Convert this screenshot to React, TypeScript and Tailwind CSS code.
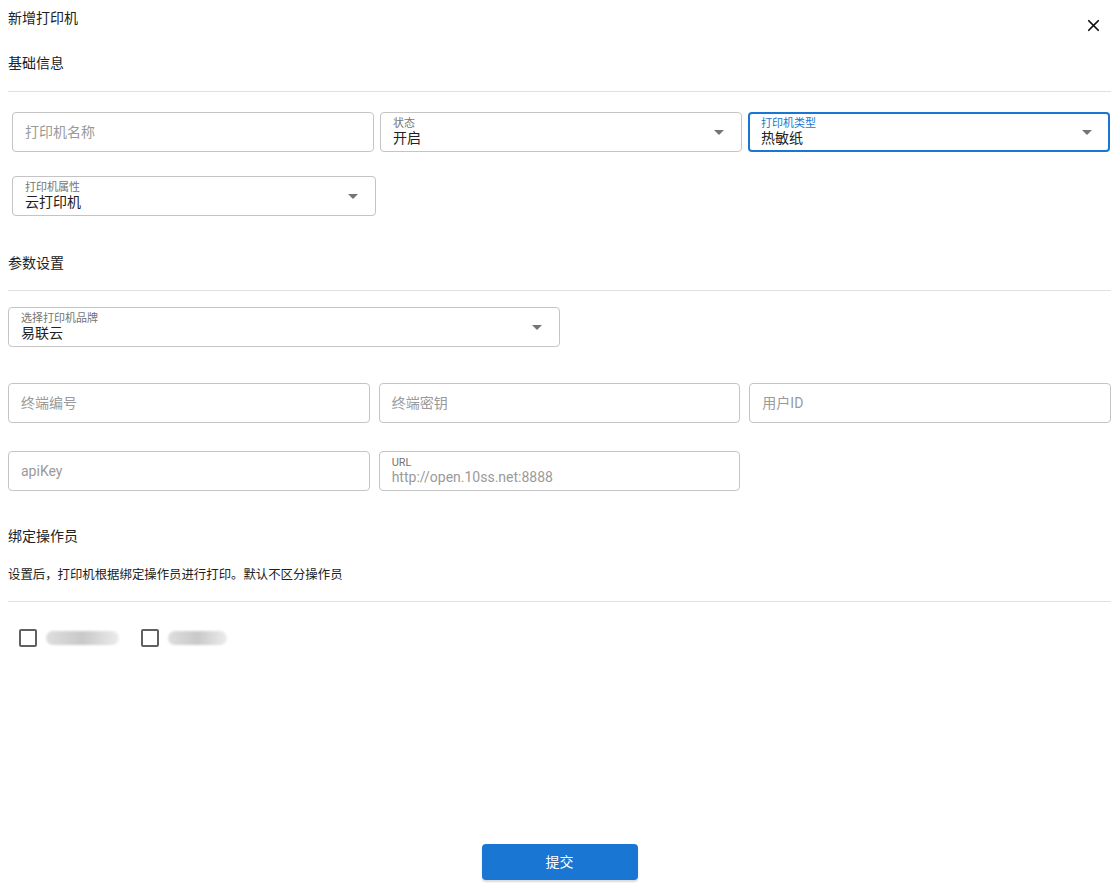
import { X } from 'lucide-react'

type FieldProps = {
  label?: string
  value?: string
  placeholder?: string
  select?: boolean
  focused?: boolean
  className?: string
}

function Field({ label, value, placeholder, select, focused, className }: FieldProps) {
  return (
    <div
      className={`relative flex h-[40px] items-center rounded-[4px] bg-white ${
        focused ? 'border-2 border-[#1976d2] px-[11px]' : 'border border-[#c4c4c4] px-[12px]'
      } ${className ?? ''}`}
    >
      <div className="flex min-w-0 flex-1 flex-col justify-center">
        {label && (
          <span
            className={`text-[11px] leading-[12px] ${focused ? 'text-[#1976d2]' : 'text-[#757575]'}`}
          >
            {label}
          </span>
        )}
        {value && <span className="text-[14px] leading-[17px] text-[#212121]">{value}</span>}
        {placeholder && (
          <span className="text-[14px] leading-[17px] text-[#9a9a9a]">{placeholder}</span>
        )}
      </div>
      {select && (
        <span className="mr-[5px] h-0 w-0 border-x-[5px] border-t-[5px] border-x-transparent border-t-[#757575]" />
      )}
    </div>
  )
}

function SectionTitle({ children, className }: { children: string; className?: string }) {
  return <div className={`px-2 text-[14px] leading-[16px] text-[#212121] ${className ?? ''}`}>{children}</div>
}

function Divider({ className }: { className?: string }) {
  return <div className={`mx-2 h-px bg-[#e0e0e0] ${className ?? ''}`} />
}

function Operator({ width }: { width: number }) {
  return (
    <label className="flex items-center gap-[9px]">
      <span className="h-[18px] w-[18px] rounded-[2px] border-2 border-[#616161]" />
      <span
        className="h-[14px] rounded-full bg-gradient-to-r from-[#dedede] via-[#c9c9c9] to-[#ececec] blur-[1px]"
        style={{ width }}
      />
    </label>
  )
}

export default function App() {
  return (
    <div
      className="relative flex h-[889px] w-[1119px] flex-col bg-white"
      style={{ fontFamily: 'Roboto, "Noto Sans CJK SC", sans-serif' }}
    >
      <div className="h-[40px] px-2 pt-[10px] text-[14px] leading-[16px] text-[#212121]">新增打印机</div>
      <button className="absolute right-[16px] top-[16px] text-[#111]">
        <X size={19} strokeWidth={2.2} />
      </button>

      <SectionTitle className="mt-[15px]">基础信息</SectionTitle>
      <Divider className="mt-[20px]" />

      <div className="mt-[20px] grid grid-cols-3 gap-[6px] pl-[12px] pr-[9px]">
        <Field placeholder="打印机名称" />
        <Field label="状态" value="开启" select />
        <Field label="打印机类型" value="热敏纸" select focused />
      </div>
      <div className="mt-[24px] pl-[12px]">
        <Field label="打印机属性" value="云打印机" select className="w-[364px]" />
      </div>

      <SectionTitle className="mt-[39px]">参数设置</SectionTitle>
      <Divider className="mt-[19px]" />

      <div className="mt-[16px] px-2">
        <Field label="选择打印机品牌" value="易联云" select className="w-[552px]" />
      </div>

      <div className="mt-[36px] grid grid-cols-3 gap-x-[9px] gap-y-[28px] px-2">
        <Field placeholder="终端编号" />
        <Field placeholder="终端密钥" />
        <Field placeholder="用户ID" />
        <Field placeholder="apiKey" />
        <Field label="URL" placeholder="http://open.10ss.net:8888" />
      </div>

      <SectionTitle className="mt-[37px]">绑定操作员</SectionTitle>
      <div className="mt-[23px] px-2 text-[12.4px] leading-[16px] text-[#212121]">
        设置后，打印机根据绑定操作员进行打印。默认不区分操作员
      </div>
      <Divider className="mt-[18px]" />

      <div className="mt-[27px] flex items-center gap-[22px] pl-[19px]">
        <Operator width={73} />
        <Operator width={59} />
      </div>

      <div className="mt-auto flex justify-center pb-[9px]">
        <button className="h-[36px] w-[156px] rounded-[4px] bg-[#1976d2] text-[14px] text-white shadow-[0_2px_2px_rgba(0,0,0,0.15)]">
          提交
        </button>
      </div>
    </div>
  )
}
